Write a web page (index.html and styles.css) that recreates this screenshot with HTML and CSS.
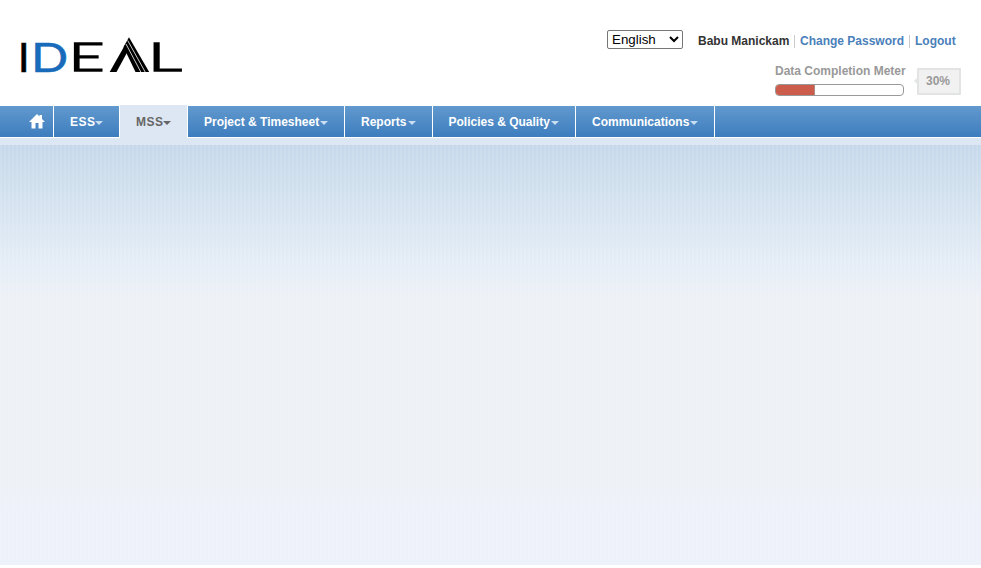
FILE: index.html
```html
<!DOCTYPE html>
<html lang="en">
<head>
<meta charset="utf-8">
<title>IDEAL</title>
<link rel="stylesheet" href="styles.css">
</head>
<body>
<header class="header">
  <svg class="logo" width="184" height="70" viewBox="10 20 184 70" role="img" aria-label="IDEAL">
    <g class="logo-text">
      <text transform="translate(17.7 72) scale(1.05 1)">I</text>
      <text class="blue" transform="translate(31 72) scale(1.2 1)">D</text>
      <text class="thin" transform="translate(68.700 71.300) scale(1.51 .97)">E</text>
      <text class="thin" transform="translate(148 71.300) scale(1.63 .97)">L</text>
    </g>
    <path d="M109.700 72L125.500 44L129 49L116.500 72Z"/>
    <path d="M129 37.300L149.200 72H135.500L123.500 47Z"/>
    <path class="ray" d="M127.700 40.500L145.200 72M126 44L140.800 72"/>
  </svg>
  <div class="account">
    <div class="userbar">
      <select class="language" aria-label="Language"><option>English</option></select>
      <span class="user">Babu Manickam</span>
      <a class="link password">Change Password</a>
      <a class="link logout">Logout</a>
    </div>
    <div class="completion">
      <div class="meter">
        <div class="meter-label">Data Completion Meter</div>
        <div class="bar"><div class="fill"></div></div>
      </div>
      <div class="percent">30%</div>
    </div>
  </div>
</header>
<nav class="nav">
  <a class="item home" aria-label="Home"><svg width="16" height="15" viewBox="0 0 16 15"><path d="M8 0L10.500 2.500V1H13V5L16 8H13.500V14.500H9.500V9H6.500V14.500H2.500V8H0Z"/></svg></a>
  <a class="item ess"><span>ESS</span></a>
  <a class="item mss active"><span>MSS</span></a>
  <a class="item project"><span>Project &amp; Timesheet</span></a>
  <a class="item reports"><span>Reports</span></a>
  <a class="item policies"><span>Policies &amp; Quality</span></a>
  <a class="item comms"><span>Communications</span></a>
</nav>
<div class="subnav"></div>
<main class="content"></main>
</body>
</html>
```
FILE: styles.css
```css
* { box-sizing: border-box; }
body {
  margin: 0;
  height: 568px;
  overflow: hidden;
  background: #fff;
  font: bold 12px/14px "Liberation Sans", Arial, sans-serif;
}
.header {
  display: flex;
  justify-content: space-between;
  height: 106px;
  padding: 20px 20px 0 10px;
}
.logo-text { font: 400 40.7px Lato, sans-serif; fill: #000; stroke: #000; stroke-width: .5; }
.logo-text .blue { fill: #176bba; stroke: #176bba; }
.logo-text .thin { font-weight: 300; stroke-width: 1.7; }
.ray { fill: none; stroke: #fff; stroke-width: .8; }
.account { width: 354px; padding-top: 10px; }
.userbar { display: flex; height: 22px; align-items: center; }
.language {
  width: 76px;
  height: 19px;
  margin: -3px 15px 0 0;
  padding: 0;
  border: 1px solid #767676;
  border-radius: 2px;
  background: #fff;
  color: #000;
  font: 13.333px "Liberation Sans", Arial, sans-serif;
}
.user { width: 96px; color: #333; white-space: nowrap; }
.link { color: #4a80ba; white-space: nowrap; border-left: 1px solid #ccc; padding-left: 5px; height: 13px; line-height: 13px; }
.password { width: 115px; }
.completion { display: flex; padding: 12px 0 0 168px; }
.meter { width: 142px; }
.meter-label { color: #999; white-space: nowrap; }
.bar {
  width: 129px;
  height: 12px;
  margin-top: 6px;
  overflow: hidden;
  border: 1px solid #999;
  border-radius: 4px;
}
.fill { width: 39px; height: 10px; background: #cc5c4b; border-right: 1px solid #b08a84; }
.percent {
  position: relative;
  width: 44px;
  height: 27px;
  margin-top: 4px;
  border: 2px solid #e2e4e4;
  border-radius: 1px;
  background: #f1f1f1;
  color: #999;
  line-height: 23px;
  text-align: center;
  text-indent: -2px;
}
.percent::before {
  content: "";
  position: absolute;
  left: -5px;
  top: 7px;
  border: solid transparent;
  border-width: 4px 4px 4px 0;
  border-right-color: #e4e6e6;
}
.nav {
  display: flex;
  height: 32px;
  border-bottom: 1px solid #fff;
  background: linear-gradient(#6299ce, #3d7dbe);
}
.item {
  display: flex;
  align-items: center;
  height: 31px;
  padding-left: 16px;
  border-right: 1px solid #fff;
  color: #fff;
  white-space: nowrap;
}
.item span { display: flex; align-items: center; }
.item span::after {
  content: "";
  margin: 3px 0 0 1px;
  border: solid transparent;
  border-width: 4px 4px 0;
  border-top-color: #c8def2;
}
.home { width: 54px; padding-left: 29px; }
.home svg { fill: #fff; margin-bottom: 1px; }
.ess { width: 66px; letter-spacing: .5px; }
.mss { width: 68px; letter-spacing: .5px; }
.ess span::after, .mss span::after { margin-left: -.5px; }
.active { height: 33px; margin-top: -1px; background: #dde7f3; color: #666; }
.active span::after { border-top-color: #666; }
.project { width: 157px; }
.reports { width: 88px; }
.reports span::after { margin-left: 2px; }
.policies { width: 143px; padding-left: 15.5px; }
.policies span::after { margin-left: 1.5px; }
.comms { width: 139px; }
.subnav { height: 7px; background: #dde7f3; }
.content {
  height: 420px;
  background:
    repeating-linear-gradient(90deg, rgba(255,255,255,.1) 0 2px, transparent 2px 4px),
    linear-gradient(#c5d8ea, #d5e3f0 60px, #e5edf6 120px, #ecf0f7 149px, #edf1f5 150px, #edf1f6 335px, #edf1fa 374px);
}
```
